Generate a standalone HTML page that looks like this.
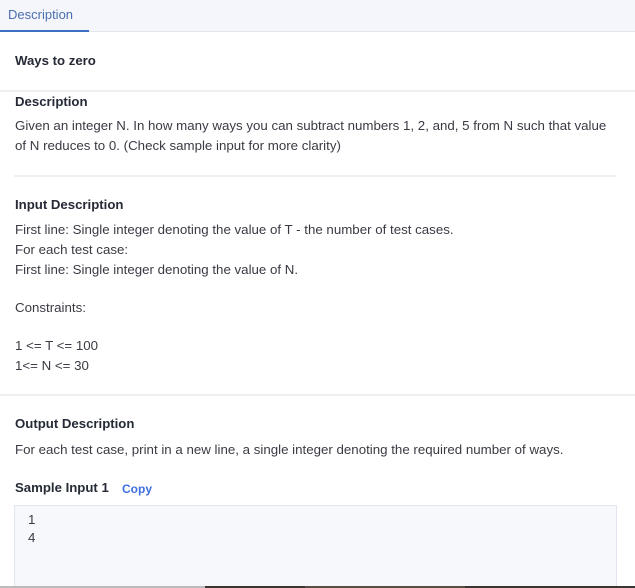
<!DOCTYPE html>
<html style="overflow:hidden"><head><meta charset="utf-8"><style>
html,body{overflow:hidden;height:588px}
body{margin:0;width:635px;background:#fff;font-family:"Liberation Sans",sans-serif;color:#3a3a44;font-size:13.3px;position:relative}
.a{position:absolute;white-space:nowrap;line-height:16px}
.b{font-weight:bold;color:#262a36;font-size:13.2px}
.l{position:absolute;background:#eef0f3}
</style></head><body>
<div style="position:absolute;left:0;top:0;width:635px;height:31px;background:#f5f6fb;border-bottom:1px solid #e2e5ec"></div>
<div style="position:absolute;left:0;top:30px;width:89px;height:2px;background:#3d6fc4"></div>
<div class="a" style="left:8px;top:7px;color:#4a6fb0;font-size:13px">Description</div>
<div class="a b" style="left:15px;top:53px">Ways to zero</div>
<div class="l" style="left:0;top:90px;width:635px;height:2px"></div>
<div class="a b" style="left:15px;top:94px">Description</div>
<div class="a" style="left:15px;top:118px">Given an integer N. In how many ways you can subtract numbers 1, 2, and, 5 from N such that value</div>
<div class="a" style="left:15px;top:138px">of N reduces to 0. (Check sample input for more clarity)</div>
<div class="l" style="left:14px;top:175px;width:602px;height:2px"></div>
<div class="a b" style="left:15px;top:197px">Input Description</div>
<div class="a" style="left:15px;top:222px">First line: Single integer denoting the value of T - the number of test cases.</div>
<div class="a" style="left:15px;top:242px">For each test case:</div>
<div class="a" style="left:15px;top:262px">First line: Single integer denoting the value of N.</div>
<div class="a" style="left:15px;top:300px">Constraints:</div>
<div class="a" style="left:15px;top:338px">1 &lt;= T &lt;= 100</div>
<div class="a" style="left:15px;top:358px">1&lt;= N &lt;= 30</div>
<div class="l" style="left:0;top:394px;width:635px;height:2px"></div>
<div class="a b" style="left:15px;top:416px">Output Description</div>
<div class="a" style="left:15px;top:442px">For each test case, print in a new line, a single integer denoting the required number of ways.</div>
<div class="a b" style="left:15px;top:480px">Sample Input 1</div>
<div class="a" style="left:122px;top:481px;color:#3f6fe0;font-weight:bold;font-size:12px">Copy</div>
<div style="position:absolute;left:14px;top:505px;width:601px;height:83px;background:#f6f8fc;border:1px solid #e2e6ee;border-bottom:none"></div>
<div class="a" style="left:28px;top:512px">1</div>
<div class="a" style="left:28px;top:530px">4</div>
<div style="position:absolute;left:0;top:586px;width:205px;height:2px;background:#bbb"></div>
<div style="position:absolute;left:205px;top:586px;width:430px;height:2px;background:#3a3530"></div>
<div style="position:absolute;left:305px;top:586px;width:160px;height:2px;background:#5a4e42"></div>
</body></html>
